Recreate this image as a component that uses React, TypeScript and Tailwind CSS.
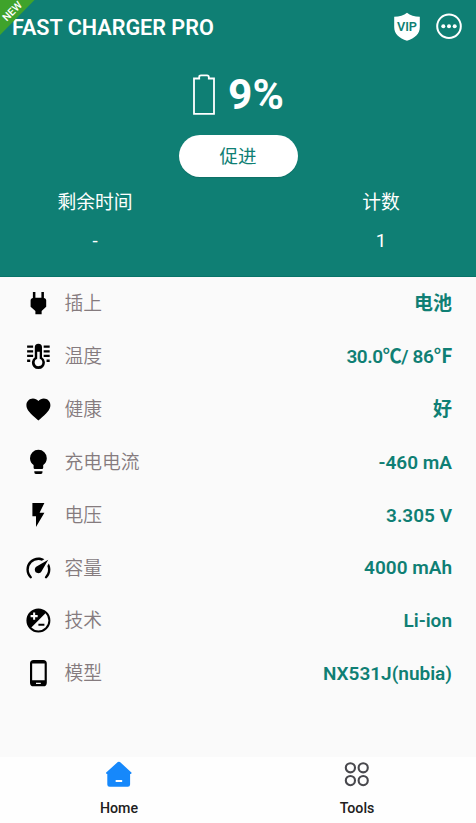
import type { ReactNode } from "react";

type Row = {
  label: string;
  value: string;
  icon: ReactNode;
  tight?: boolean;
};

const ROWS: Row[] = [
  {
    label: "插上",
    value: "电池",
    icon: (
      <path d="M16.6 7.4V2.4h-2.1v4.8H9.5V2.4H7.4v5C6.5 7.6 5.5 8.4 5.5 9.3v5.4L9.5 18.4V21h5.2v-2.6l3.8-3.7V9.3c0-.9-.9-1.7-1.9-1.9z" />
    ),
  },
  {
    label: "温度",
    value: "30.0℃/ 86℉",
    tight: true,
    icon: (
      <>
        <path d="M2.6 2.9h5v1.9h-5zM2.6 6.8h5v1.9h-5zM2.6 10.6h5v1.9h-5zM2.6 14.6h2.6v2H2.6zM16.4 2.9h5v1.9h-5zM16.4 6.8h5v1.9h-5zM16.4 10.6h5v1.9h-5zM18.8 14.6h2.6v2h-2.6z" />
        <path
          fillRule="evenodd"
          d="M12 1.4a3 3 0 0 0-3 3v8.3a5.4 5.4 0 1 0 6 0V4.4a3 3 0 0 0-3-3zM11 8.1h2.1v5.8c1.3.4 2.2 1.6 2.2 3a3.2 3.2 0 1 1-4.3-3z"
        />
      </>
    ),
  },
  {
    label: "健康",
    value: "好",
    icon: (
      <path d="M12 21.35l-1.45-1.32C5.4 15.36 2 12.28 2 8.5 2 5.42 4.42 3 7.5 3c1.74 0 3.41.81 4.5 2.09C13.09 3.81 14.76 3 16.5 3 19.58 3 22 5.42 22 8.5c0 3.78-3.4 6.86-8.55 11.54L12 21.35z" />
    ),
  },
  {
    label: "充电电流",
    value: "-460 mA",
    icon: (
      <path d="M12 1.5a7 7 0 0 0-7 7c0 2.4 1.2 4.5 3 5.7v2.3a1 1 0 0 0 1 1h6a1 1 0 0 0 1-1v-2.3c1.8-1.2 3-3.3 3-5.7a7 7 0 0 0-7-7zM8.6 19.3v1a1.3 1.3 0 0 0 1.3 1.3h4.2a1.3 1.3 0 0 0 1.3-1.3v-1z" />
    ),
  },
  {
    label: "电压",
    value: "3.305 V",
    icon: <path d="M7 1.7v11h3v9l7-12h-4l4-8z" />,
  },
  {
    label: "容量",
    value: "4000 mAh",
    icon: (
      <path d="M12,16A3,3 0 0,1 9,13C9,11.88 9.61,10.9 10.5,10.39L20.21,4.77L14.68,14.35C14.18,15.33 13.17,16 12,16M12,3C13.81,3 15.5,3.5 16.97,4.32L14.87,5.53C14,5.19 13,5 12,5A8,8 0 0,0 4,13C4,15.21 4.89,17.21 6.34,18.65H6.35C6.74,19.04 6.74,19.67 6.35,20.06C5.96,20.45 5.32,20.45 4.93,20.07V20.07C3.12,18.26 2,15.76 2,13A10,10 0 0,1 12,3M22,13C22,15.76 20.88,18.26 19.07,20.07V20.07C18.68,20.45 18.05,20.45 17.66,20.06C17.27,19.67 17.27,19.04 17.66,18.65V18.65C19.11,17.2 20,15.21 20,13C20,12 19.81,11 19.46,10.1L20.67,8C21.5,9.5 22,11.18 22,13Z" />
    ),
  },
  {
    label: "技术",
    value: "Li-ion",
    icon: (
      <path
        fillRule="evenodd"
        d="M12 2a10 10 0 1 0 0 20 10 10 0 0 0 0-20zM5.5 7.6h2.1V5.5h1.7v2.1h2.1v1.7H9.3v2.1H7.6V9.3H5.5zM17.9 6.1a8.3 8.3 0 0 1-11.8 11.8zM12 14.8v1.7h5v-1.7z"
      />
    ),
  },
  {
    label: "模型",
    value: "NX531J(nubia)",
    icon: (
      <path
        fillRule="evenodd"
        d="M8 .8h8a3 3 0 0 1 3 3v16a3 3 0 0 1-3 3H8a3 3 0 0 1-3-3v-16a3 3 0 0 1 3-3zm-1.2 3v14h10.4v-14zM10 19.8v1h4v-1z"
      />
    ),
  },
];

export default function App() {
  return (
    <div className="flex h-[823px] w-[476px] flex-col overflow-hidden bg-[#fafafa] font-[Roboto,'Noto_Sans_CJK_SC',sans-serif]">
      <header className="relative flex h-[277px] shrink-0 flex-col border-b border-[#087469] bg-[#0f7f74] text-white">
        <NewRibbon />
        <div className="flex h-[53px] items-center pl-3 pr-[13px]">
          <h1 className="flex-1 whitespace-nowrap pt-0.5 text-[21.6px] font-semibold leading-none">FAST CHARGER PRO</h1>
          <VipShield />
          <MoreIcon />
        </div>

        <div className="mt-[17px] flex h-[50px] items-center justify-center gap-3">
          <svg viewBox="0 0 24 42" className="h-[42px] w-6" fill="none" stroke="white" strokeWidth="1.8">
            <path d="M2 39.8V4.5H7.2V3Q7.2 1.3 9 1.3H15Q16.8 1.3 16.8 3V4.5H22V39.8Z" />
          </svg>
          <span className="text-[42.5px] font-bold leading-[50px]">9%</span>
        </div>

        <button className="mx-auto mt-[15px] flex h-[42px] w-[119px] items-center justify-center rounded-full bg-white pt-0.5 text-[18.5px] leading-none text-[#0f7f74] shadow-[0_1px_1px_rgba(0,0,0,0.12)]">
          促进
        </button>

        <div className="mt-3 flex justify-between">
          <Stat label="剩余时间" value="-" />
          <Stat label="计数" value="1" />
        </div>
      </header>

      <main className="flex flex-1 flex-col">
        {ROWS.map((row) => (
          <div key={row.label} className="flex h-[52.9px] items-center pl-[23.6px] pr-6 leading-none">
            <svg viewBox="0 0 24 24" className="h-[28.8px] w-[28.8px]" fill="black">
              {row.icon}
            </svg>
            <span className="ml-3 flex-1 pt-0.5 text-[18.8px] font-[350] text-[#857b7e]">{row.label}</span>
            <span
              className={
                row.tight
                  ? "text-[19px] font-semibold tracking-[-0.4px] text-[#0f7f74]"
                  : "text-[19px] font-semibold text-[#0f7f74]"
              }
            >
              {row.value}
            </span>
          </div>
        ))}
      </main>

      <nav className="grid h-[66px] shrink-0 grid-cols-2 bg-[#fefefe] text-[14.2px] font-medium text-[#202020]">
        <NavItem label="Home">
          <svg viewBox="0 0 28 28" className="h-7 w-7">
            <path
              d="M12.8 2.1L1.2 12.4Q0.5 13.6 1.9 13.9H2.3V24.5Q2.3 26.8 4.6 26.8H22.8Q25.1 26.8 25.1 24.5V13.9H25.7Q27.1 13.6 26.4 12.4L15 2.1Q13.9 1.2 12.8 2.1Z"
              fill="#1688fb"
            />
            <rect x="10.6" y="20" width="6.6" height="2" rx="0.5" fill="white" />
          </svg>
        </NavItem>
        <NavItem label="Tools">
          <svg viewBox="0 0 28 28" className="h-7 w-7" fill="none" stroke="#48484d" strokeWidth="2.1">
            <circle cx="7.4" cy="7.8" r="4.6" />
            <circle cx="20.2" cy="7.8" r="4.6" />
            <circle cx="7.4" cy="20.6" r="4.6" />
            <circle cx="20.2" cy="20.6" r="4.6" />
          </svg>
        </NavItem>
      </nav>
    </div>
  );
}

function NewRibbon() {
  return (
    <div className="absolute left-0 top-0 h-9 w-9">
      <svg viewBox="0 0 36 36" className="h-9 w-9">
        <path d="M0 0H34.5L0 35Z" fill="#3fa32b" />
        <text
          x="12.3"
          y="11.3"
          transform="rotate(-45 12.3 11.3)"
          textAnchor="middle"
          dominantBaseline="central"
          fill="white"
          className="font-[Roboto,sans-serif] text-[10.5px] font-medium"
        >
          NEW
        </text>
      </svg>
    </div>
  );
}

function VipShield() {
  return (
    <svg viewBox="0 0 28 30" className="h-[30px] w-7">
      <path
        d="M14 0.8C10.8 3.6 6.5 4.6 1.2 4.8V15C1.2 22 6 26 14 28.8C22 26 26.8 22 26.8 15V4.8C21.5 4.6 17.2 3.6 14 0.8Z"
        fill="white"
      />
      <text
        x="14"
        y="18.8"
        textAnchor="middle"
        textLength="20"
        lengthAdjust="spacingAndGlyphs"
        fill="#0f7f74"
        className="font-[Roboto,sans-serif] text-[13px] font-semibold"
      >
        VIP
      </text>
    </svg>
  );
}

function MoreIcon() {
  return (
    <svg viewBox="0 0 28 28" className="ml-[14px] h-7 w-7">
      <circle cx="14" cy="13.2" r="11.8" fill="none" stroke="white" strokeWidth="2" />
      <circle cx="8.3" cy="13.2" r="2" fill="white" />
      <circle cx="14" cy="13.2" r="2" fill="white" />
      <circle cx="19.7" cy="13.2" r="2" fill="white" />
    </svg>
  );
}

function Stat({ label, value }: { label: string; value: string }) {
  return (
    <div className="flex w-[190px] flex-col items-center text-[18.8px] font-normal leading-7">
      <span>{label}</span>
      <span className="mt-[10px]">{value}</span>
    </div>
  );
}

function NavItem({ label, children }: { label: string; children: ReactNode }) {
  return (
    <div className="flex flex-col items-center pt-[3px]">
      {children}
      <span className="mt-[10px] leading-5">{label}</span>
    </div>
  );
}
